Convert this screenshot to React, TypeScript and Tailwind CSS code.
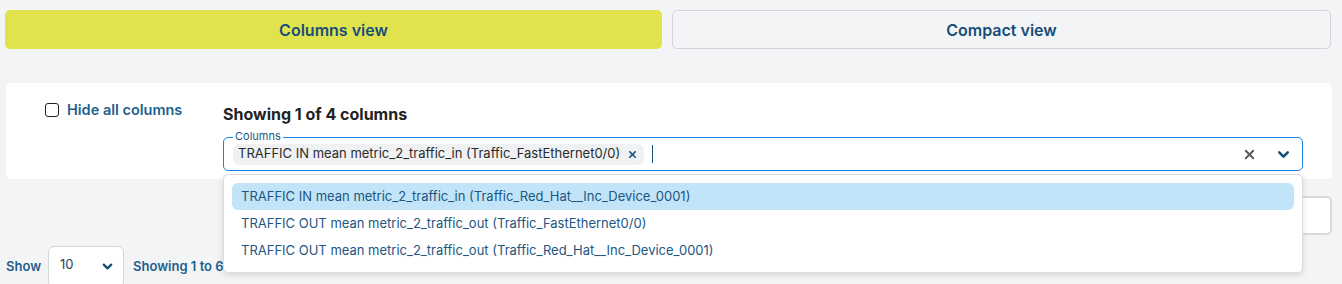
import { X, ChevronDown } from 'lucide-react';

const options = [
  'TRAFFIC IN mean metric_2_traffic_in (Traffic_Red_Hat__Inc_Device_0001)',
  'TRAFFIC OUT mean metric_2_traffic_out (Traffic_FastEthernet0/0)',
  'TRAFFIC OUT mean metric_2_traffic_out (Traffic_Red_Hat__Inc_Device_0001)',
];

function ColumnsSelect() {
  return (
    <div className="relative">
      <div className="h-[34px] rounded-[5px] border border-[#1a84e6] pl-[9px] pr-[10px] flex items-center">
        <span className="absolute -top-[8px] left-[10px] bg-white px-[2px] text-[11px] leading-[14px] text-[#1c5a86]">
          Columns
        </span>
        <span className="flex items-center h-[21px] rounded-[6px] bg-[#f0f1f3] pl-[5px] pr-[6px] text-[13px] text-[#2b2b2b]">
          TRAFFIC IN mean metric_2_traffic_in (Traffic_FastEthernet0/0)
          <X className="ml-[7px] w-[11px] h-[11px] text-[#1c4f78]" strokeWidth={3.5} />
        </span>
        <span className="ml-[8px] w-px h-[18px] bg-[#1c4f78]" />
        <div className="flex-1" />
        <X className="w-[15px] h-[15px] text-[#5b5b5b]" strokeWidth={3} />
        <ChevronDown className="ml-[18px] w-[17px] h-[17px] text-[#144d78]" strokeWidth={3.5} />
      </div>
      <div className="absolute left-0 right-0 top-[37px] z-10 rounded-[5px] border border-[#dcdcdc] bg-white shadow-[0_2px_6px_rgba(0,0,0,0.12)] px-[8px] py-[8px]">
        {options.map((o, i) => (
          <div
            key={o}
            className={`h-[27px] flex items-center px-[9px] rounded-[6px] text-[13px] text-[#1d5682] ${i === 0 ? 'bg-[#c1e4f9]' : ''}`}
          >
            {o}
          </div>
        ))}
      </div>
    </div>
  );
}

export default function App() {
  return (
    <div className="w-[1342px] h-[284px] overflow-hidden bg-[#f3f4f6]" style={{ fontFamily: 'Inter, "Noto Sans", sans-serif' }}>
      <div className="flex gap-[10px] pl-[5px] pr-[11px] pt-[10px]">
        <button className="flex-1 h-[39px] rounded-[5px] bg-[#e1e34c] text-[16px] font-semibold text-[#174e7a]">
          Columns view
        </button>
        <button className="flex-1 h-[39px] rounded-[5px] border border-[#d4d5d8] bg-[#f3f4f6] text-[16px] font-semibold text-[#174e7a]">
          Compact view
        </button>
      </div>

      <div className="mt-[34px] ml-[6px] mr-[10px] h-[96px] rounded-[5px] bg-white flex">
        <label className="w-[217px] pl-[39px] pt-[18px] flex items-start gap-[8px]">
          <span className="mt-[2px] w-[14px] h-[14px] rounded-[3px] border-[1.5px] border-[#222] bg-white" />
          <span className="text-[14.5px] leading-[18px] font-semibold text-[#1e5f8e]">Hide all columns</span>
        </label>
        <div className="flex-1 pt-[21px] pr-[29px]">
          <div className="text-[16px] leading-[20px] font-bold text-[#222]">Showing 1 of 4 columns</div>
          <div className="mt-[13px]">
            <ColumnsSelect />
          </div>
        </div>
      </div>

      <div className="flex justify-end mt-[17px] pr-[10px]">
        <div className="w-[200px] h-[39px] rounded-[5px] border-2 border-[#dadada] bg-white" />
      </div>

      <div className="flex items-center mt-[11px] pl-[6px]">
        <span className="text-[13px] font-semibold text-[#1e5f8e]">Show</span>
        <div className="ml-[7px] w-[76px] h-[42px] rounded-[6px] border border-[#d4d5d8] bg-white flex items-start pt-[8px] pl-[11px] pr-[8px]">
          <span className="text-[13px] text-[#1e3f5e] flex-1">10</span>
          <ChevronDown className="mt-[4px] w-[15px] h-[15px] text-[#144d78]" strokeWidth={3.5} />
        </div>
        <span className="ml-[9px] text-[13px] font-semibold text-[#1e5f8e]">Showing 1 to 6 of 6 entries</span>
      </div>
    </div>
  );
}
